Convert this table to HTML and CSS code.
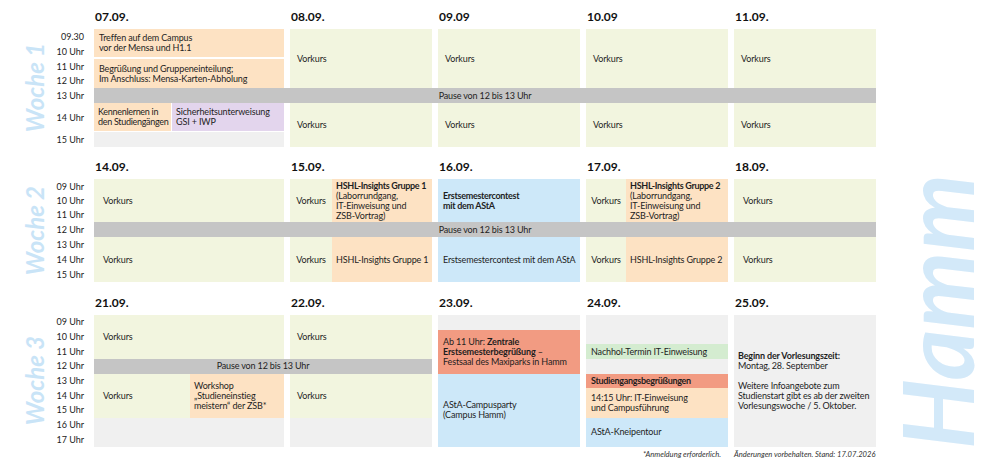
FILE: index.html
```html
<!DOCTYPE html>
<html lang="de">
<head>
<meta charset="utf-8">
<title>Erstsemester-Wochen Hamm</title>
<link rel="stylesheet" href="styles.css">
</head>
<body>
<div class="page">
  <div class="weeks">
    <section class="week w1">
      <div class="wlabel r2 wl1">Woche 1</div>
      <div class="date c1">07.09.</div>
      <div class="date c2">08.09.</div>
      <div class="date c3">09.09</div>
      <div class="date c4">10.09</div>
      <div class="date c5">11.09.</div>

      <div class="time r2">09.30</div>
      <div class="time r3">10 Uhr</div>
      <div class="time r4">11 Uhr</div>
      <div class="time r5">12 Uhr</div>
      <div class="time r6">13 Uhr</div>
      <div class="time r7">14 Uhr</div>
      <div class="time r8">15 Uhr</div>

      <div class="cell orange c1 r2 s2 gapb2"><span>Treffen auf dem Campus<br>vor der Mensa und H1.1</span></div>
      <div class="cell orange c1 r4 s2"><span>Begrüßung und Gruppeneinteilung;<br>Im Anschluss: Mensa-Karten-Abholung</span></div>
      <div class="split c1 r7 gapb1">
        <div class="cell orange kenn"><span>Kennenlernen in<br>den Studiengängen</span></div>
        <div class="cell purple grow"><span>Sicherheitsunterweisung<br>GSI + IWP</span></div>
      </div>
      <div class="cell gray c1 r8"></div>

      <div class="cell green vk c2 r2 s4">Vorkurs</div>
      <div class="cell green vk c3 r2 s4">Vorkurs</div>
      <div class="cell green vk c4 r2 s4">Vorkurs</div>
      <div class="cell green vk c5 r2 s4">Vorkurs</div>
      <div class="cell green vk c2 r7 s2">Vorkurs</div>
      <div class="cell green vk c3 r7 s2">Vorkurs</div>
      <div class="cell green vk c4 r7 s2">Vorkurs</div>
      <div class="cell green vk c5 r7 s2">Vorkurs</div>

      <div class="cell pause call r6">Pause von 12 bis 13 Uhr</div>
    </section>

    <section class="week w2">
      <div class="wlabel r2 wl2">Woche 2</div>
      <div class="date c1">14.09.</div>
      <div class="date c2">15.09.</div>
      <div class="date c3">16.09.</div>
      <div class="date c4">17.09.</div>
      <div class="date c5">18.09.</div>

      <div class="time r2">09 Uhr</div>
      <div class="time r3">10 Uhr</div>
      <div class="time r4">11 Uhr</div>
      <div class="time r5">12 Uhr</div>
      <div class="time r6">13 Uhr</div>
      <div class="time r7">14 Uhr</div>
      <div class="time r8">15 Uhr</div>

      <div class="cell green vk wide c1 r2 s3">Vorkurs</div>
      <div class="cell green vk wide c1 r6 s3">Vorkurs</div>

      <div class="split c2 r2 s3">
        <div class="cell green mini m42">Vorkurs</div>
        <div class="cell orange grow"><span><b class="nb">HSHL-Insights Gruppe 1</b><br>(Laborrundgang,<br>IT-Einweisung und<br>ZSB-Vortrag)</span></div>
      </div>
      <div class="split c2 r6 s3">
        <div class="cell green mini m42">Vorkurs</div>
        <div class="cell orange grow">HSHL-Insights Gruppe 1</div>
      </div>

      <div class="cell blue c3 r2 s3"><b class="nb">Erstsemestercontest<br>mit dem AStA</b></div>
      <div class="cell blue c3 r6 s3">Erstsemestercontest mit dem AStA</div>

      <div class="split c4 r2 s3">
        <div class="cell green mini m40">Vorkurs</div>
        <div class="cell orange grow"><span><b class="nb">HSHL-Insights Gruppe 2</b><br>(Laborrundgang,<br>IT-Einweisung und<br>ZSB-Vortrag)</span></div>
      </div>
      <div class="split c4 r6 s3">
        <div class="cell green mini m40">Vorkurs</div>
        <div class="cell orange grow">HSHL-Insights Gruppe 2</div>
      </div>

      <div class="cell green vk wide c5 r2 s3">Vorkurs</div>
      <div class="cell green vk wide c5 r6 s3">Vorkurs</div>

      <div class="cell pause call r5">Pause von 12 bis 13 Uhr</div>
    </section>

    <section class="week w3">
      <div class="wlabel r2 wl3">Woche 3</div>
      <div class="date c1">21.09.</div>
      <div class="date c2">22.09.</div>
      <div class="date c3">23.09.</div>
      <div class="date c4">24.09.</div>
      <div class="date c5">25.09.</div>

      <div class="time r2">09 Uhr</div>
      <div class="time r3">10 Uhr</div>
      <div class="time r4">11 Uhr</div>
      <div class="time r5">12 Uhr</div>
      <div class="time r6">13 Uhr</div>
      <div class="time r7">14 Uhr</div>
      <div class="time r8">15 Uhr</div>
      <div class="time r9">16 Uhr</div>
      <div class="time r10">17 Uhr</div>

      <div class="cell green vk wide c1 r2 s3">Vorkurs</div>
      <div class="split c1 r6 s3">
        <div class="cell green vk wide m96">Vorkurs</div>
        <div class="cell orange grow"><span>Workshop<br>„Studieneinstieg<br>meistern“ der ZSB*</span></div>
      </div>
      <div class="cell gray c1 r9 s2"></div>

      <div class="cell green vk c2 r2 s3">Vorkurs</div>
      <div class="cell green vk c2 r6 s3">Vorkurs</div>
      <div class="cell gray c2 r9 s2"></div>

      <div class="cell pause c12 r5">Pause von 12 bis 13 Uhr</div>

      <div class="cell gray c3 r2"></div>
      <div class="cell salmon c3 r3 s3"><span>Ab 11 Uhr: <b>Zentrale<br>Erstsemesterbegrüßung</b> –<br>Festsaal des Maxiparks in Hamm</span></div>
      <div class="cell blue c3 r6 s5"><span>AStA-Campusparty<br>(Campus Hamm)</span></div>

      <div class="cell gray c4 r2 s2"></div>
      <div class="cell mint c4 r4">Nachhol-Termin IT-Einweisung</div>
      <div class="cell gray c4 r5"></div>
      <div class="cell salmon c4 r6"><b class="nb">Studiengangsbegrüßungen</b></div>
      <div class="cell orange c4 r7 s2"><span>14:15 Uhr: IT-Einweisung<br>und Campusführung</span></div>
      <div class="cell blue c4 r9 s2">AStA-Kneipentour</div>

      <div class="cell gray c5 r2 s9 info"><span><b>Beginn der Vorlesungszeit:</b><br>Montag, 28. September<br><br>Weitere Infoangebote zum<br>Studienstart gibt es ab der zweiten<br>Vorlesungswoche / 5. Oktober.</span></div>

      <div class="note c4 r11 right">*Anmeldung erforderlich.</div>
      <div class="note c5 r11">Änderungen vorbehalten. Stand: 17.07.2026</div>
    </section>
  </div>
  <div class="hamm"><span class="hamm-text">Hamm</span></div>
</div>
</body>
</html>
```

FILE: styles.css
```css
* { box-sizing: border-box; }
html, body { margin: 0; padding: 0; background: #ffffff; }
body {
  font-family: Lato, "Noto Sans", "Liberation Sans", sans-serif;
  font-size: 9px;
  line-height: 10px;
  color: #1e1e1e;
}
b { font-weight: 700; }

.page { display: flex; width: 1000px; height: 476px; overflow: hidden; }
.weeks { width: 876px; flex: none; }

.week {
  display: grid;
  grid-template-columns: 48px 34px 190px repeat(4, 142px);
  column-gap: 6px;
}
.w1 { grid-template-rows: 29px 15px 15px 15px 14px 15px 29px 15px; }
.w2 { margin-top: 3px; grid-template-rows: 29px 15px 14px 14px 15px 15px 15px 15px; }
.w3 { margin-top: 4px; grid-template-rows: 29px repeat(9, 14.67px) 14px; }

/* placement */
.c1 { grid-column: 3; }
.c2 { grid-column: 4; }
.c3 { grid-column: 5; }
.c4 { grid-column: 6; }
.c5 { grid-column: 7; }
.call { grid-column: 3 / -1; }
.c12 { grid-column: 3 / 5; }
.r2 { grid-row-start: 2; }
.r3 { grid-row-start: 3; }
.r4 { grid-row-start: 4; }
.r5 { grid-row-start: 5; }
.r6 { grid-row-start: 6; }
.r7 { grid-row-start: 7; }
.r8 { grid-row-start: 8; }
.r9 { grid-row-start: 9; }
.r10 { grid-row-start: 10; }
.r11 { grid-row-start: 11; }
.s2 { grid-row-end: span 2; }
.s3 { grid-row-end: span 3; }
.s4 { grid-row-end: span 4; }
.s5 { grid-row-end: span 5; }
.s9 { grid-row-end: span 9; }

.date {
  grid-row: 1;
  align-self: end;
  font-size: 12px;
  line-height: 14px;
  font-weight: 700;
  padding: 0 0 5px 1px;
  color: #111;
}

.time {
  grid-column: 2;
  align-self: center;
  text-align: right;
  padding-right: 4px;
  color: #222;
}

.wlabel {
  grid-column: 1;
  writing-mode: vertical-rl;
  transform: rotate(180deg);
  font-size: 24px;
  line-height: 24px;
  font-weight: 700;
  font-style: italic;
  color: #c9e4f7;
  align-self: center;
  justify-self: end;
  margin-right: 1px;
}
.wl1 { grid-row-end: 9; }
.wl2 { grid-row-end: 9; }
.wl3 { grid-row-end: 11; }

.cell {
  display: flex;
  align-items: center;
  padding: 0 5px;
  min-width: 0;
  white-space: nowrap;
  letter-spacing: -0.15px;
}
.split { display: flex; gap: 0; }
.gapb2 { margin-bottom: 2px; }
.gapb1 { margin-bottom: 1px; }
.split.gapb1 { gap: 1px; }
.kenn { width: 77px; flex: none; padding-left: 4px; padding-right: 0; letter-spacing: -0.3px; }
.grow { flex: 1; padding-left: 4px; }
.mini { justify-content: center; padding: 0; flex: none; }
.m42 { width: 42px; }
.m40 { width: 40px; }
.m96 { width: 96px; flex: none; }
.vk { padding-left: 7px; }
.vk.wide { padding-left: 9px; }
.nb { letter-spacing: -0.3px; }
.info { padding-left: 4px; line-height: 10px; }

.green { background: #f2f5df; }
.orange { background: #fde2c3; }
.purple { background: #e3d5ed; }
.gray { background: #f0f0f0; }
.blue { background: #cde8f9; }
.salmon { background: #f29b82; }
.mint { background: #d4ecd0; }
.pause { background: #c5c5c5; justify-content: center; }

.note {
  align-self: center;
  font-size: 7.6px;
  line-height: 10px;
  font-style: italic;
  color: #333;
  white-space: nowrap;
}
.right { text-align: right; padding-right: 7px; }

.hamm {
  flex: 1;
  display: flex;
  justify-content: center;
  align-items: flex-end;
  padding-bottom: 27px;
}
.hamm-text {
  writing-mode: vertical-rl;
  transform: rotate(180deg);
  font-size: 98px;
  line-height: 98px;
  font-weight: 700;
  font-style: italic;
  color: #d3e9f9;
  margin-right: 4px;
}
```
